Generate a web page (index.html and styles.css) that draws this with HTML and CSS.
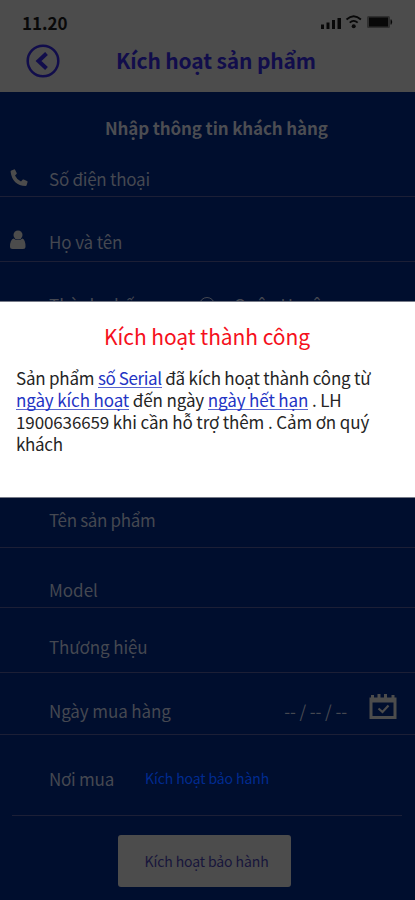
FILE: index.html
```html
<!DOCTYPE html>
<html lang="vi">
<head>
<meta charset="utf-8">
<title>Kích hoạt sản phẩm</title>
<link rel="stylesheet" href="styles.css">
</head>
<body>
<div class="screen">
  <header class="header">
    <div class="status">
      <span class="time">11.20</span>
      <svg class="status-icons" width="72" height="16" viewBox="0 0 72 16">
        <path d="M0 10.500h3V15H0zM5.500 8.500h3V15h-3zM11 6h3v9h-3zM16.500 4h3.500v11h-3.500z"/>
        <path class="wave" d="M25.500 5.500q7.200-6.600 14.400 0M28.700 8.700q4-3.600 8 0"/>
        <circle cx="32.700" cy="12.300" r="2"/>
        <rect class="battery" x="46" y="2" width="23" height="12" rx="1.500"/>
        <rect x="48" y="3.500" width="19" height="9"/>
        <path d="M69.500 5.500h1q1.500 2.500 0 5h-1z"/>
      </svg>
    </div>
    <div class="nav">
      <svg class="back" width="34" height="34" viewBox="0 0 34 34">
        <circle cx="17" cy="17" r="15.300"/>
        <path d="M20.500 9.500l-8 7.500 8 7.500"/>
      </svg>
      <h1 class="title">Kích hoạt sản phẩm</h1>
    </div>
  </header>

  <main class="form">
    <h2 class="section">Nhập thông tin khách hàng</h2>
    <div class="row phone">
      <svg class="icon" width="18" height="18" viewBox="0 0 18 18"><path d="M1.300 1.400L4 .400q.800-.200 1.200.500l1.500 3q.300.700-.200 1.200L5 6.500q1.700 4 6 6l1.500-1.700q.500-.600 1.200-.300l3.300 1.400q.800.400.600 1.200l-.900 3q-.200.900-1.100.900Q2.500 16.500.600 2.700.500 1.700 1.300 1.400z"/></svg>
      <span class="label">Số điện thoại</span>
    </div>
    <div class="row name">
      <svg class="icon" width="18" height="20" viewBox="0 0 18 20"><circle cx="8" cy="5" r="4.500"/><path d="M3.500 8.500Q8 11.500 12.500 8.500 15.500 10 15.500 16.500q0 2.500-2.500 2.500H2.500Q0 19 0 16.500 0 10 3.500 8.500z"/></svg>
      <span class="label">Họ và tên</span>
    </div>
    <div class="row city">
      <span class="label">Thành phố</span>
      <span class="district"><i class="ring"></i><span>Quận Huyện</span></span>
    </div>
    <div class="row product"><span class="label">Tên sản phẩm</span></div>
    <div class="row model"><span class="label">Model</span></div>
    <div class="row brand"><span class="label">Thương hiệu</span></div>
    <div class="row date">
      <span class="label">Ngày mua hàng</span>
      <span class="date-value">-- / -- / --</span>
      <svg class="calendar" width="28" height="27" viewBox="0 0 28 27">
        <path class="frame" d="M2 6h24v18.500H2z"/>
        <path d="M1 5h26v4.500H1z"/>
        <path class="pins" d="M3.500 6V2M10 6V1M16.500 6V1M24 6V2"/>
        <path class="check" d="M9.500 15.500l4 3.500 6-6.500"/>
      </svg>
    </div>
    <div class="row place">
      <span class="label">Nơi mua</span>
      <span class="link">Kích hoạt bảo hành</span>
    </div>
    <button class="submit">Kích hoạt bảo hành</button>
  </main>

  <section class="dialog">
    <h2 class="dialog-title">Kích hoạt thành công</h2>
    <p class="message">
      <span class="l1">Sản phẩm <a>số Serial</a> đã kích hoạt thành công từ</span>
      <span class="l2"><a>ngày kích hoạt</a> đến ngày <a>ngày hết hạn</a> . LH</span>
      <span class="l3">1900636659 khi cần hỗ trợ thêm . Cảm ơn quý</span>
      <span class="l4">khách</span>
    </p>
  </section>
</div>
</body>
</html>
```
FILE: styles.css
```css
* { box-sizing: border-box; }
body { margin: 0; font-family: "Noto Sans CJK JP", "Noto Sans", sans-serif; }
h1, h2, p { margin: 0; }
.screen { position: relative; width: 415px; height: 900px; overflow: hidden; background: #000e2e; }
.header { height: 92px; background: #4c4c4c; }
.status { display: flex; justify-content: space-between; padding: 14px 22px 0 22px; height: 41px; }
.time { margin-top: -1px; font-size: 17px; line-height: 20px; font-weight: 700; color: #090909; }
.status-icons { fill: #080808; }
.status-icons .wave { fill: none; stroke: #080808; stroke-width: 1.8; }
.status-icons .battery { fill: #303030; }
.nav { display: flex; align-items: center; height: 40px; padding-left: 26px; }
.back { fill: none; stroke: #110d4b; stroke-width: 2.5; }
.back path { stroke-width: 4; }
.title { margin: -3px 0 0 56px; font-size: 21px; line-height: 30px; font-weight: 700; color: #110d4b; letter-spacing: -.15px; white-space: nowrap; }
.section { height: 58px; padding: 24px 0 0 105px; font-size: 17px; line-height: 24px; font-weight: 700; color: #4c4d52; letter-spacing: -.13px; white-space: nowrap; }
.row { display: flex; align-items: flex-end; border-bottom: 1px solid #1c1f36; padding-left: 10px; color: #454851; font-size: 17px; line-height: 24px; white-space: nowrap; }
.icon { fill: #4c4c4c; width: 18px; margin-right: 21px; flex: none; margin-bottom: 4px; }
.label { flex: none; }
.row > .label:first-child { margin-left: 39px; }
.phone { height: 47px; padding-bottom: 5px; letter-spacing: -.25px; }
.name { height: 65px; padding-bottom: 7px; letter-spacing: -.1px; }
.city { height: 69px; padding-bottom: 13px; }
.product { height: 63px; margin-top: 154px; padding-bottom: 15px; letter-spacing: -.33px; }
.model { height: 60px; padding-bottom: 5px; }
.brand { height: 65px; padding-bottom: 13px; letter-spacing: -.1px; }
.date { height: 62px; padding-bottom: 11px; letter-spacing: -.1px; }
.row.place { height: 81px; padding: 0 0 24px; margin: 0 13px 0 12px; }
.row.place > .label { margin-left: 37px; letter-spacing: -.25px; }
.district { display: flex; align-items: center; gap: 19px; margin-left: 64px; }
.ring { width: 16px; height: 16px; border: 1.5px solid #454851; border-radius: 50%; }
.date-value { margin-left: auto; margin-right: 22px; }
.calendar { flex: none; margin-right: 18px; margin-bottom: 3px; fill: #4c4c4c; }
.calendar .frame { fill: none; stroke: #4c4c4c; stroke-width: 3; }
.calendar .pins { stroke: #4c4c4c; stroke-width: 3; }
.calendar .check { fill: none; stroke: #4c4c4c; stroke-width: 2.2; }
.link { margin: 0 0 1px 31px; font-size: 14px; letter-spacing: -.1px; color: #002b91; }
.submit { display: block; width: 173px; height: 52px; margin: 19px 0 0 118px; padding: 0 0 0 4px; border: 0; border-radius: 3px; background: #4c4c4c; color: #17153b; font: 14px "Noto Sans CJK JP", "Noto Sans", sans-serif; letter-spacing: -.1px; }
.dialog { position: absolute; top: 301px; left: 0; width: 415px; height: 197px; padding-top: 18px; background: #fff; border-top: 1px solid #777b88; border-bottom: 1px solid #777b88; }
.dialog-title { padding-left: 104px; font-size: 21px; line-height: 32px; font-weight: 400; color: #f5101c; letter-spacing: -.05px; white-space: nowrap; }
.message { padding: 15px 0 0 16px; font-size: 17px; line-height: 22px; color: #252525; }
.message span { display: block; width: max-content; height: 22px; white-space: nowrap; }
.message a { display: inline-block; height: 22px; color: #2334c4; background: linear-gradient(#5966d0, #5966d0) 0 20px / 100% 1px no-repeat; }
.message .l1 { letter-spacing: -.21px; }
.message .l1 a { letter-spacing: -.4px; }
.message .l2, .message .l3 { letter-spacing: -.12px; }
.message .l4 { letter-spacing: -.3px; }
```
